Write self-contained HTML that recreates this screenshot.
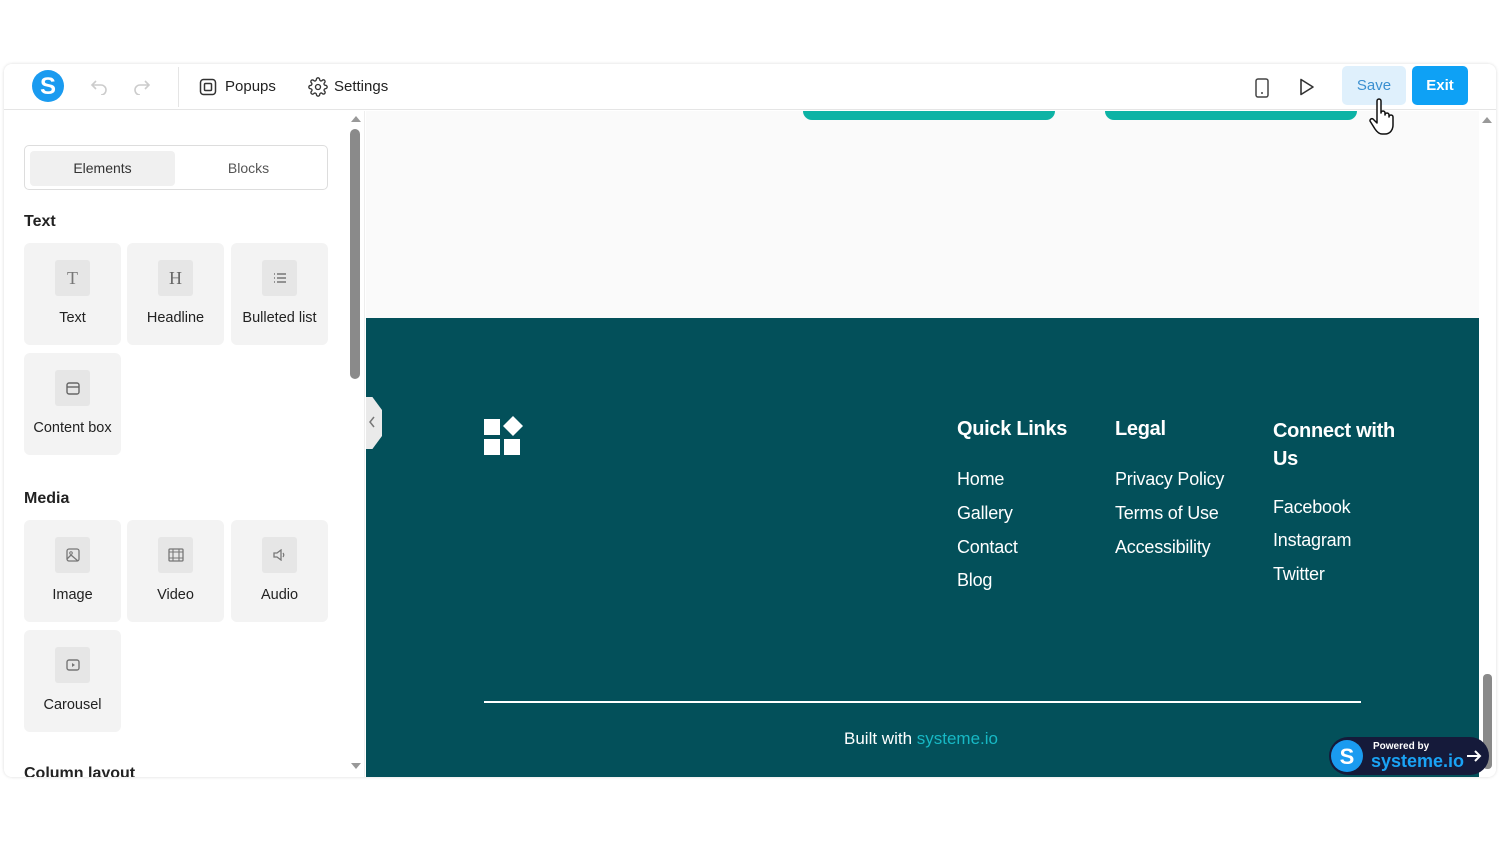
<!DOCTYPE html>
<html><head><meta charset="utf-8">
<style>
*{box-sizing:border-box;margin:0;padding:0}
body{width:1500px;height:844px;background:#fff;font-family:"Liberation Sans",sans-serif;position:relative;overflow:hidden;color:#222}
.abs{position:absolute}
.frame{left:4px;top:64px;width:1492px;height:713px;border-radius:8px;box-shadow:0 0 3px rgba(0,0,0,.15);background:#fff;overflow:hidden}
.top{left:0;top:0;width:1492px;height:46px;border-bottom:1px solid #e5e5e5;background:#fff}
.card{position:absolute;width:97px;height:102px;background:#f3f3f3;border-radius:6px}
.card .ic{position:absolute;left:31px;top:17px;width:35px;height:36px;background:#e6e6e6;border-radius:3px;display:flex;align-items:center;justify-content:center}
.card .lb{position:absolute;left:0;right:0;top:67px;text-align:center;font-size:14.5px;color:#222}
.sec{font-size:16px;font-weight:bold;color:#222}
.ft{color:#fff;font-size:18px;letter-spacing:-0.2px}
.fh{color:#fff;font-size:20px;font-weight:bold;letter-spacing:-0.3px}
</style></head><body>
<div class="abs frame">
  <div class="abs top">
    <svg class="abs" style="left:28px;top:6px" width="32" height="32" viewBox="0 0 32 32"><circle cx="16" cy="16" r="16" fill="#1a9bf0"/><text x="16" y="24" text-anchor="middle" font-family="Liberation Sans" font-weight="bold" font-size="24" fill="#fff">S</text></svg>
    <svg class="abs" style="left:86px;top:15px" width="18" height="16" viewBox="0 0 18 16"><path d="M6 2L2 6l4 4M2 6h9a5 5 0 010 10" fill="none" stroke="#ccc" stroke-width="1.6"/></svg>
    <svg class="abs" style="left:129px;top:15px" width="18" height="16" viewBox="0 0 18 16"><path d="M12 2l4 4-4 4M16 6H7a5 5 0 000 10" fill="none" stroke="#ccc" stroke-width="1.6"/></svg>
    <div class="abs" style="left:174px;top:3px;width:1px;height:40px;background:#e5e5e5"></div>
    <svg class="abs" style="left:195px;top:14px" width="18" height="18" viewBox="0 0 18 18"><rect x="1.5" y="1.5" width="15" height="15" rx="3" fill="none" stroke="#333" stroke-width="1.5"/><rect x="5.5" y="5.5" width="7" height="7" rx="1" fill="none" stroke="#333" stroke-width="1.5"/></svg>
    <div class="abs" style="left:221px;top:14px;font-size:15px;color:#222">Popups</div>
    <svg class="abs" style="left:304px;top:13px" width="20" height="20" viewBox="0 0 24 24"><path d="M12 15a3 3 0 100-6 3 3 0 000 6z M19.4 15a1.7 1.7 0 00.3 1.8l.1.1a2 2 0 11-2.8 2.8l-.1-.1a1.7 1.7 0 00-1.8-.3 1.7 1.7 0 00-1 1.5V21a2 2 0 11-4 0v-.1a1.7 1.7 0 00-1.1-1.5 1.7 1.7 0 00-1.8.3l-.1.1a2 2 0 11-2.8-2.8l.1-.1a1.7 1.7 0 00.3-1.8 1.7 1.7 0 00-1.5-1H3a2 2 0 110-4h.1a1.7 1.7 0 001.5-1.1 1.7 1.7 0 00-.3-1.8l-.1-.1a2 2 0 112.8-2.8l.1.1a1.7 1.7 0 001.8.3H9a1.7 1.7 0 001-1.5V3a2 2 0 114 0v.1a1.7 1.7 0 001 1.5 1.7 1.7 0 001.8-.3l.1-.1a2 2 0 112.8 2.8l-.1.1a1.7 1.7 0 00-.3 1.8V9a1.7 1.7 0 001.5 1H21a2 2 0 110 4h-.1a1.7 1.7 0 00-1.5 1z" fill="none" stroke="#333" stroke-width="1.6"/></svg>
    <div class="abs" style="left:330px;top:14px;font-size:15px;color:#222">Settings</div>
    <svg class="abs" style="left:1251px;top:14px" width="14" height="20" viewBox="0 0 14 20"><rect x="1" y="1" width="12" height="18" rx="2" fill="none" stroke="#444" stroke-width="1.5"/><circle cx="7" cy="15" r="1" fill="#444"/></svg>
    <svg class="abs" style="left:1295px;top:14px" width="16" height="18" viewBox="0 0 16 18"><path d="M2 1.5v15l12-7.5z" fill="none" stroke="#333" stroke-width="1.6" stroke-linejoin="round"/></svg>
    <div class="abs" style="left:1338px;top:2px;width:64px;height:39px;background:#dff0fc;border-radius:5px;color:#3a8fd0;font-size:15px;text-align:center;line-height:39px">Save</div>
    <div class="abs" style="left:1408px;top:2px;width:56px;height:39px;background:#0ea1f5;border-radius:5px;color:#fff;font-size:15px;font-weight:bold;text-align:center;line-height:39px">Exit</div>
  </div>
  <div class="abs" style="left:0;top:47px;width:361px;height:666px;background:#fff;border-right:1px solid #eee">
    <div class="abs" style="left:20px;top:34px;width:304px;height:45px;border:1px solid #ddd;border-radius:5px"></div>
    <div class="abs" style="left:26px;top:40px;width:145px;height:35px;background:#f0f0f0;border-radius:4px;text-align:center;line-height:35px;font-size:14px;color:#333">Elements</div>
    <div class="abs" style="left:172px;top:40px;width:145px;height:35px;text-align:center;line-height:35px;font-size:14px;color:#555">Blocks</div>
    <div class="abs sec" style="left:20px;top:102px">Text</div>
    <div class="card" style="left:20px;top:132px"><div class="ic"><span style="font-family:'Liberation Serif';font-size:18px;color:#777">T</span></div><div class="lb">Text</div></div>
    <div class="card" style="left:123px;top:132px"><div class="ic"><span style="font-family:'Liberation Serif';font-size:18px;color:#666">H</span></div><div class="lb">Headline</div></div>
    <div class="card" style="left:227px;top:132px"><div class="ic"><svg width="14" height="12" viewBox="0 0 14 12"><path d="M1 2h1M1 6h1M1 10h1M4 2h9M4 6h9M4 10h9" stroke="#777" stroke-width="1.4"/></svg></div><div class="lb">Bulleted list</div></div>
    <div class="card" style="left:20px;top:242px"><div class="ic"><svg width="14" height="13" viewBox="0 0 14 13"><rect x="1" y="1" width="12" height="11" rx="2" fill="none" stroke="#666" stroke-width="1.4"/><path d="M1 5h12" stroke="#666" stroke-width="1.4"/></svg></div><div class="lb">Content box</div></div>
    <div class="abs sec" style="left:20px;top:379px">Media</div>
    <div class="card" style="left:20px;top:409px"><div class="ic"><svg width="14" height="14" viewBox="0 0 14 14"><rect x="1" y="1" width="12" height="12" rx="2" fill="none" stroke="#777" stroke-width="1.3"/><circle cx="5" cy="5" r="1.3" fill="none" stroke="#777"/><path d="M1 11l4-4 7 6" fill="none" stroke="#777" stroke-width="1.3"/></svg></div><div class="lb">Image</div></div>
    <div class="card" style="left:123px;top:409px"><div class="ic"><svg width="16" height="14" viewBox="0 0 16 14"><rect x="1" y="1" width="14" height="12" rx="1" fill="none" stroke="#777" stroke-width="1.3"/><path d="M1 4h14M1 10h14M5 1v12M11 1v12" stroke="#777" stroke-width="1.1"/></svg></div><div class="lb">Video</div></div>
    <div class="card" style="left:227px;top:409px"><div class="ic"><svg width="14" height="12" viewBox="0 0 14 12"><path d="M1 4h3l4-3v10l-4-3H1z" fill="none" stroke="#777" stroke-width="1.3"/><path d="M10 4q1.5 2 0 4" fill="none" stroke="#777" stroke-width="1.2"/></svg></div><div class="lb">Audio</div></div>
    <div class="card" style="left:20px;top:519px"><div class="ic"><svg width="14" height="12" viewBox="0 0 14 12"><rect x="1" y="1" width="12" height="10" rx="2" fill="none" stroke="#777" stroke-width="1.4"/><path d="M6 4l3 2-3 2z" fill="#777"/></svg></div><div class="lb">Carousel</div></div>
    <div class="abs sec" style="left:20px;top:654px">Column layout</div>
    <div class="abs" style="left:346px;top:18px;width:10px;height:250px;background:#8a8a8a;border-radius:5px"></div>
    <div class="abs" style="left:347px;top:5px;width:0;height:0;border-left:5px solid transparent;border-right:5px solid transparent;border-bottom:6px solid #999"></div>
    <div class="abs" style="left:347px;top:652px;width:0;height:0;border-left:5px solid transparent;border-right:5px solid transparent;border-top:6px solid #999"></div>
  </div>
  <div class="abs" style="left:362px;top:47px;width:1113px;height:207px;background:#fafafa"></div>
  <div class="abs" style="left:799px;top:47px;width:252px;height:9px;background:#0db3a5;border-radius:0 0 14px 14px"></div>
  <div class="abs" style="left:1101px;top:47px;width:252px;height:9px;background:#0db3a5;border-radius:0 0 14px 14px"></div>
  <div class="abs" style="left:362px;top:254px;width:1113px;height:459px;background:#03505a"></div>
  <div class="abs" style="left:362px;top:333px;width:16px;height:52px;background:#eaeaea;clip-path:polygon(0 0,40% 0,100% 25%,100% 75%,40% 100%,0 100%)"></div>
  <svg class="abs" style="left:364px;top:352px" width="8" height="12" viewBox="0 0 8 12"><path d="M6 1L2 6l4 5" fill="none" stroke="#777" stroke-width="1.5"/></svg>
  <svg class="abs" style="left:479px;top:352px" width="42" height="42" viewBox="0 0 42 42"><rect x="1" y="3" width="16" height="16" fill="#fff"/><rect x="1" y="23" width="16" height="16" fill="#fff"/><rect x="21" y="23" width="16" height="16" fill="#fff"/><path d="M30 0l10 10-10 10-10-10z" fill="#fff"/></svg>
  <div class="abs fh" style="left:953px;top:354px">Quick Links</div>
  <div class="abs ft" style="left:953px;top:405px">Home</div>
  <div class="abs ft" style="left:953px;top:439px">Gallery</div>
  <div class="abs ft" style="left:953px;top:473px">Contact</div>
  <div class="abs ft" style="left:953px;top:506px">Blog</div>
  <div class="abs fh" style="left:1111px;top:354px">Legal</div>
  <div class="abs ft" style="left:1111px;top:405px">Privacy Policy</div>
  <div class="abs ft" style="left:1111px;top:439px">Terms of Use</div>
  <div class="abs ft" style="left:1111px;top:473px">Accessibility</div>
  <div class="abs fh" style="left:1269px;top:353px;line-height:28px">Connect with<br>Us</div>
  <div class="abs ft" style="left:1269px;top:433px">Facebook</div>
  <div class="abs ft" style="left:1269px;top:466px">Instagram</div>
  <div class="abs ft" style="left:1269px;top:500px">Twitter</div>
  <div class="abs" style="left:480px;top:637px;width:877px;height:2px;background:#fff"></div>
  <div class="abs" style="left:840px;top:665px;font-size:17px;color:#fff">Built with <span style="color:#17b8c4">systeme.io</span></div>
  <div class="abs" style="left:1476px;top:47px;width:16px;height:666px;background:#fff"></div>
  <div class="abs" style="left:1479px;top:610px;width:9px;height:95px;background:#8a8a8a;border-radius:4px"></div>
  <div class="abs" style="left:1478px;top:53px;width:0;height:0;border-left:5px solid transparent;border-right:5px solid transparent;border-bottom:6px solid #999"></div>
  <div class="abs" style="left:1325px;top:673px;width:160px;height:38px;background:#151a3a;border-radius:19px"></div>
  <svg class="abs" style="left:1327px;top:676px" width="32" height="32" viewBox="0 0 32 32"><circle cx="16" cy="16" r="16" fill="#1a9bf0"/><text x="16" y="24" text-anchor="middle" font-family="Liberation Sans" font-weight="bold" font-size="22" fill="#fff">S</text></svg>
  <div class="abs" style="left:1369px;top:677px;font-size:10px;color:#fff;font-weight:bold">Powered by</div>
  <div class="abs" style="left:1367px;top:687px;font-size:18px;color:#1aa3f5;font-weight:bold">systeme.io</div>
  <svg class="abs" style="left:1462px;top:685px" width="16" height="14" viewBox="0 0 16 14"><path d="M1 7h13M9 2l5 5-5 5" fill="none" stroke="#fff" stroke-width="2"/></svg>
</div>
<svg class="abs" style="left:1368px;top:98px" width="28" height="38" viewBox="0 0 28 38"><path d="M9 3a2 2 0 014 0v12a2 2 0 014 0v2a2 2 0 014 0v2a2 2 0 014 0v8c0 5-3 9-8 9h-3c-3 0-5-2-7-5l-5-8a2 2 0 013-2l4 4z" fill="#fff" stroke="#111" stroke-width="1.5" stroke-linejoin="round"/></svg>
</body></html>
